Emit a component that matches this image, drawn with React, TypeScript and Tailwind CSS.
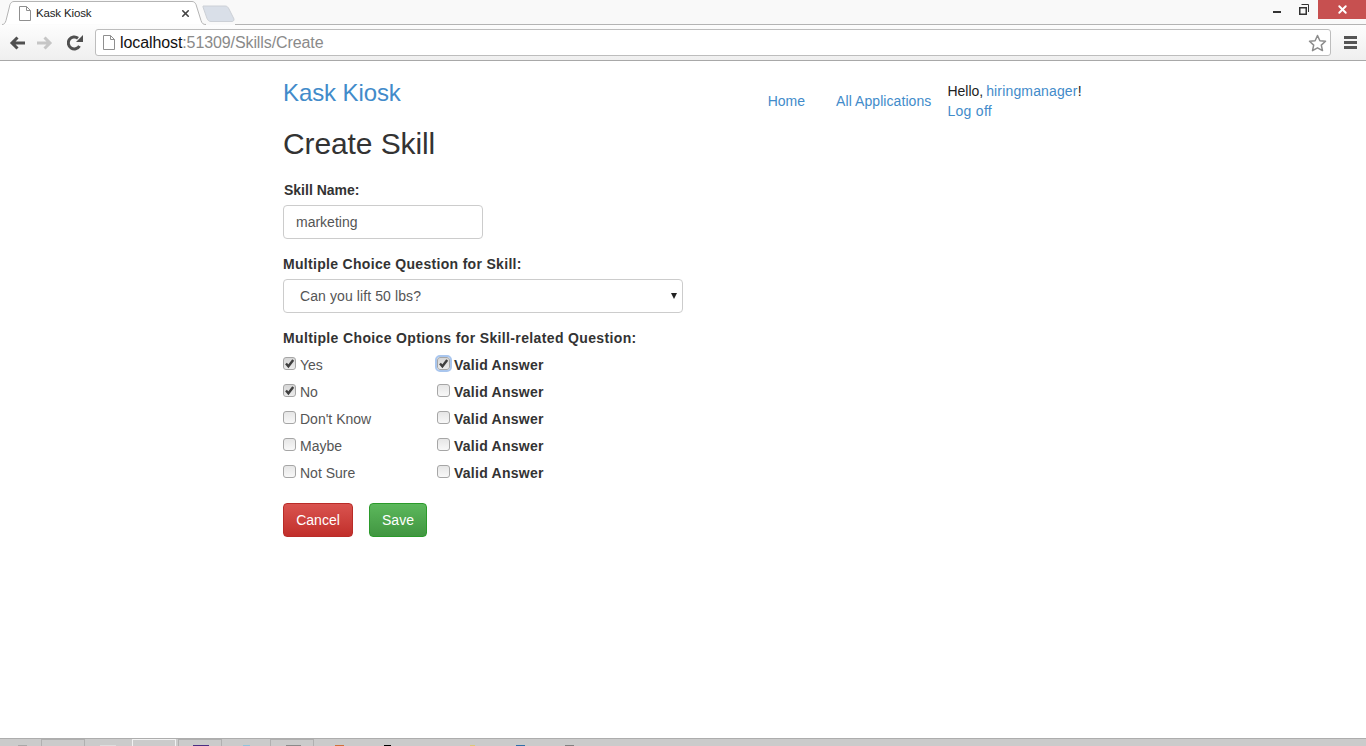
import { X } from 'lucide-react';

const options = ['Yes', 'No', "Don't Know", 'Maybe', 'Not Sure'];

function Box({ on, focus }: { on?: boolean; focus?: boolean }) {
    return (
        <span
            className={
                'flex h-[13px] w-[13px] items-center justify-center rounded-[3px] border border-[#a6a6a6] bg-gradient-to-b ' +
                (on ? 'from-[#d6d6d6] to-[#ececec] ' : 'from-[#e6e6e6] to-[#f8f8f8] ') +
                (focus ? 'outline-2 outline-[#a9c6ee]' : '')
            }
        >
            {on && (
                <svg width="11" height="11" viewBox="0 0 11 11" fill="none" stroke="#3f3f3f" strokeWidth="2.4">
                    <path d="M2 5.5l2.4 2.8L9.2 2" />
                </svg>
            )}
        </span>
    );
}

function PageIcon() {
    return (
        <svg width="12" height="15" viewBox="0 0 12 15" fill="none" stroke="#8f8f8f">
            <path d="M.5 .5h7l4 4v10h-11z" fill="#fff" />
            <path d="M7.5 .5v4h4" />
        </svg>
    );
}

function Browser() {
    return (
        <div className="shrink-0">
            <div className="flex h-[25px] items-end bg-[#f9f9f9]">
                <div className="relative ml-[2px] flex h-[24px] w-[204px] items-center pl-[17px] pr-[15px]">
                    <svg className="absolute inset-0" width="204" height="24" viewBox="0 0 204 24" fill="none">
                        <path d="M0 23.5c2 0 3-1 4-4L8 3.5C9 1.500 10 .5 12 .5h178c2 0 3 1 4 3l5 16c1 3 2 4 5 4" fill="#fff" stroke="#b4b4b4" />
                    </svg>
                    <span className="relative"><PageIcon /></span>
                    <span className="relative ml-[5px] mt-[2px] flex-1 font-['Liberation_Sans',sans-serif] text-[11.5px] tracking-[-0.15px] text-[#222]">Kask Kiosk</span>
                    <X size={11} strokeWidth={3.5} className="relative text-[#444]" />
                </div>
                <svg className="-ml-[4px] mb-[3px]" width="33" height="17" viewBox="0 0 33 17">
                    <path d="M1 1h22c2 0 3 1 4 3l5 10c0 2-1 2.500-2 2.500H9c-2 0-3-1-4-3L1 2z" fill="#d9dfe8" stroke="#ccd0d6" />
                </svg>
                <div className="flex-1 self-end border-b border-[#b4b4b4]" />
                <div className="absolute right-0 top-0 flex h-[19px] items-center">
                    <span className="mr-[18px] mt-[4px] h-[2px] w-[8px] bg-[#333]" />
                    <svg className="mr-[9px]" width="10" height="11" viewBox="0 0 10 11" fill="none" stroke="#333">
                        <path d="M.75 3.750h6.500v6.500H.75z" strokeWidth="1.500" />
                        <path d="M2.500 .5h7v7.500" />
                    </svg>
                    <div className="flex h-[19px] w-[48px] items-center justify-center bg-[#c75050]">
                        <X size={13} strokeWidth={3.5} className="text-white" />
                    </div>
                </div>
            </div>
            <div className="flex h-[36px] items-center border-b border-[#a8a8a8] bg-gradient-to-b from-[#fdfdfd] to-[#efefef] pl-[9px] pr-[9px]">
                <svg width="16" height="14" viewBox="0 0 16 14" fill="none" stroke="#505050" strokeWidth="3">
                    <path d="M16 7H4M8.500 1.500L3 7l5.500 5.500" />
                </svg>
                <svg className="ml-[12px]" width="16" height="14" viewBox="0 0 16 14" fill="none" stroke="#c6c6c6" strokeWidth="3">
                    <path d="M0 7h12M7.500 1.500L13 7l-5.500 5.500" />
                </svg>
                <svg className="ml-[14px]" width="16" height="16" viewBox="0 0 16 16" fill="none">
                    <path d="M12.500 11A6 6 0 1 1 11 3.200" stroke="#505050" strokeWidth="3" />
                    <path d="M9 7h7V0z" fill="#505050" />
                </svg>
                <div className="ml-[12px] flex h-[27px] flex-1 items-center rounded-[3px] border border-[#bdbdbd] bg-white pl-[7px] pr-[3px]">
                    <PageIcon />
                    <span className="ml-[5px] flex-1 font-['Liberation_Sans',sans-serif] text-[16px] tracking-[-0.1px] text-[#8a8a8a]">
                        <span className="text-[#111]">localhost</span>:51309/Skills/Create
                    </span>
                    <svg width="19" height="18" viewBox="0 0 19 18" fill="#fff" stroke="#8c8c8c" strokeWidth="1.500" strokeLinejoin="round">
                        <path d="M9.500 1.500l2.400 5.200 5.600.6-4.200 3.800 1.200 5.500-5-2.800-5 2.800 1.200-5.500L1.500 7.300l5.600-.6z" />
                    </svg>
                </div>
                <div className="ml-[13px] flex w-[13px] flex-col gap-[2px]">
                    <span className="h-[3px] bg-[#555]" />
                    <span className="h-[3px] bg-[#555]" />
                    <span className="h-[3px] bg-[#555]" />
                </div>
            </div>
        </div>
    );
}

function App() {
    return (
        <div className="relative flex h-[746px] flex-col overflow-hidden bg-white font-['Liberation_Sans',sans-serif] text-[14px] text-[#333]">
            <Browser />

            <div className="flex-1 pl-[283px]">
                <div className="flex h-[66px] w-[820px] whitespace-nowrap">
                    <a className="mt-[16px] text-[24px] leading-[32px] tracking-[-0.1px] text-[#428bca]">Kask Kiosk</a>
                    <div className="ml-[367px] mt-[30px] text-[#428bca]">Home</div>
                    <div className="ml-[31px] mt-[30px] tracking-[0.07px] text-[#428bca]">All Applications</div>
                    <div className="ml-[16px] mt-[20px] leading-[20px] text-[#222]">
                        <div>Hello,<span className="ml-[3px] tracking-[0.15px] text-[#428bca]">hiringmanager</span>!</div>
                        <div className="tracking-[0.3px] text-[#428bca]">Log off</div>
                    </div>
                </div>

                <h1 className="text-[30px] leading-[33px] tracking-[-0.1px] text-[#333]">Create Skill</h1>

                <div className="ml-[1px] mt-[20px] font-bold leading-[20px]">Skill Name:</div>
                <div className="mt-[5px] flex h-[34px] w-[200px] items-center rounded-[4px] border border-[#ccc] px-[12px] text-[#555]">marketing</div>

                <div className="mt-[15px] font-bold leading-[20px] tracking-[0.31px]">Multiple Choice Question for Skill:</div>
                <div className="mt-[5px] flex h-[34px] w-[400px] items-center justify-between rounded-[4px] border border-[#ccc] pl-[16px] pr-[5px] text-[#555]">
                    <span className="tracking-[0.1px]">Can you lift 50 lbs?</span>
                    <span className="h-0 w-0 border-x-[3px] border-t-[6px] border-x-transparent border-t-[#222]" />
                </div>

                <div className="mt-[15px] font-bold leading-[20px] tracking-[0.36px]">Multiple Choice Options for Skill-related Question:</div>
                <div className="mt-[7px] flex flex-col gap-[7px]">
                    {options.map((o, i) => (
                        <div key={o} className="flex h-[20px] items-center">
                            <div className="flex w-[154px] items-center">
                                <span className="mb-[4px]"><Box on={i < 2} /></span>
                                <span className="ml-[4px] text-[#555]">{o}</span>
                            </div>
                            <span className="mb-[4px]"><Box on={i === 0} focus={i === 0} /></span>
                            <span className="ml-[4px] font-bold tracking-[0.25px]">Valid Answer</span>
                        </div>
                    ))}
                </div>

                <div className="mt-[20px] flex gap-[16px]">
                    <div className="flex h-[34px] w-[70px] items-center justify-center rounded-[4px] border border-[#b92c28] bg-gradient-to-b from-[#d9534f] to-[#c12e2a] text-white">Cancel</div>
                    <div className="flex h-[34px] w-[58px] items-center justify-center rounded-[4px] border border-[#2b9a2b] bg-gradient-to-b from-[#5cb85c] to-[#419641] text-white">Save</div>
                </div>
            </div>

            <div className="relative flex h-[8px] shrink-0 border-t border-[#adadad] bg-[#cbcbcb]">
                <span className="ml-[41px] w-[44px] border-x border-t border-[#b0b0b0]" />
                <span className="ml-[47px] w-[44px] border-x border-t border-[#f2f2f2]" />
                <span className="ml-[2px] w-[44px] border-x border-t border-[#b0b0b0]" />
                <span className="ml-[48px] w-[44px] border-x border-t border-[#b0b0b0]" />
                {/* tops of the taskbar icons, only one row of them shows */}
                <span className="absolute bottom-0 left-[18px] h-[1px] w-[9px] bg-[#a8a8a8]" />
                <span className="absolute bottom-0 left-[100px] h-[1px] w-[16px] bg-[#dddddd]" />
                <span className="absolute bottom-0 left-[193px] h-[1px] w-[16px] bg-[#4b2e83]" />
                <span className="absolute bottom-0 left-[243px] h-[1px] w-[7px] bg-[#8fc4dc]" />
                <span className="absolute bottom-0 left-[286px] h-[1px] w-[15px] bg-[#8a8a8a]" />
                <span className="absolute bottom-0 left-[335px] h-[1px] w-[9px] bg-[#d0703a]" />
                <span className="absolute bottom-0 left-[384px] h-[1px] w-[7px] bg-black" />
                <span className="absolute bottom-0 left-[470px] h-[1px] w-[5px] bg-[#dcc878]" />
                <span className="absolute bottom-0 left-[516px] h-[1px] w-[9px] bg-[#2f6fa8]" />
                <span className="absolute bottom-0 left-[565px] h-[1px] w-[9px] bg-[#808080]" />
            </div>
        </div>
    );
}

export default App;
